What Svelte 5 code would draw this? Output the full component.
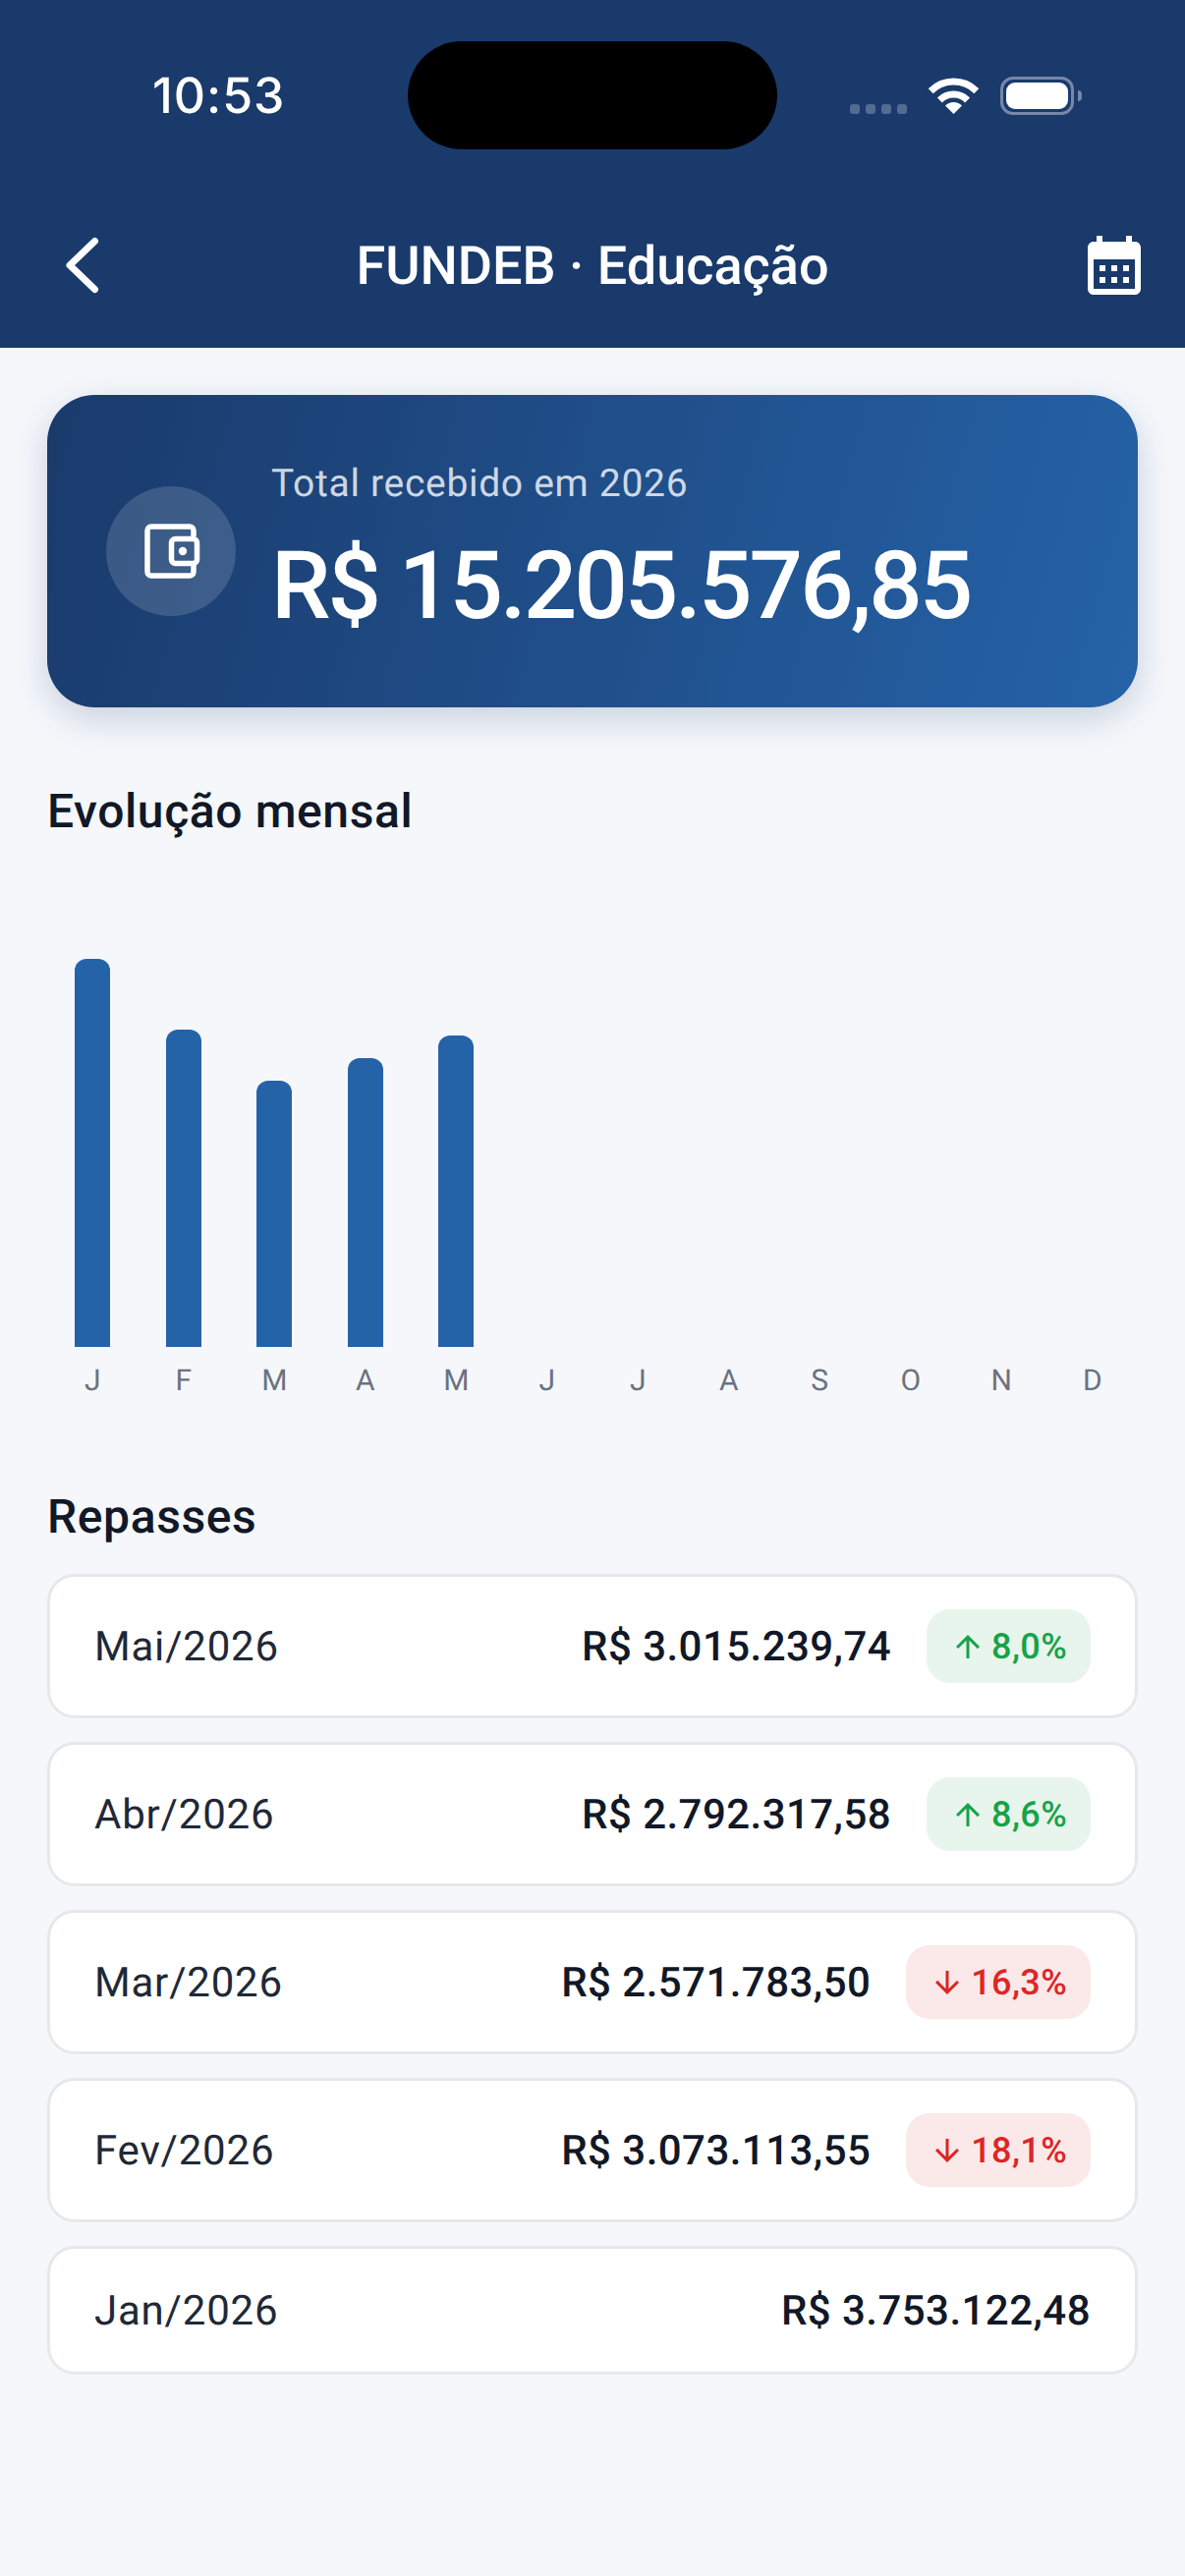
<script lang="ts">
	interface Repasse {
		month: string;
		value: number;
		delta?: number;
	}

	const MONTHS = ['J', 'F', 'M', 'A', 'M', 'J', 'J', 'A', 'S', 'O', 'N', 'D'];
	const CHART_H = 395;

	const repasses: Repasse[] = [
		{ month: 'Mai/2026', value: 3015239.74, delta: 8.0 },
		{ month: 'Abr/2026', value: 2792317.58, delta: 8.6 },
		{ month: 'Mar/2026', value: 2571783.5, delta: -16.3 },
		{ month: 'Fev/2026', value: 3073113.55, delta: -18.1 },
		{ month: 'Jan/2026', value: 3753122.48 }
	];

	const byMonth = [...repasses].reverse().map((r) => r.value);
	const max = Math.max(...byMonth);

	function money(v: number): string {
		return 'R$ ' + v.toLocaleString('pt-BR', { minimumFractionDigits: 2, maximumFractionDigits: 2 });
	}
	function pct(d: number): string {
		return Math.abs(d).toFixed(1).replace('.', ',') + '%';
	}
</script>

<div class="screen">
	<header class="top">
		<div class="status">
			<span class="time">10:53</span>
			<div class="island"></div>
			<div class="status-icons">
				<div class="signal"><i></i><i></i><i></i><i></i></div>
				<svg class="wifi" width="51" height="37" viewBox="0 0 51 37" fill="none" stroke="#fff" aria-hidden="true">
					<path d="M2.2 13.7A33 33 0 0 1 48.8 13.7" stroke-width="7" />
					<path d="M11.4 22.9A20 20 0 0 1 39.6 22.9" stroke-width="7" />
					<path d="M25.5 37L17 28.5A12 12 0 0 1 34 28.5Z" fill="#fff" stroke="none" />
				</svg>
				<div class="battery"><div class="charge"></div></div>
			</div>
		</div>
		<nav class="nav">
			<svg width="72" height="72" viewBox="0 0 72 72" fill="none" aria-hidden="true">
				<path d="M60.5 11.5L35 36L60.5 60.5" stroke="#fff" stroke-width="7" stroke-linecap="round" stroke-linejoin="round" />
			</svg>
			<h1>FUNDEB · Educação</h1>
			<svg width="72" height="72" viewBox="0 0 24 24" fill="#fff" aria-hidden="true">
				<path d="M19 4h-1V2h-2v2H8V2H6v2H5c-1.11 0-1.99.9-1.99 2L3 20c0 1.1.89 2 2 2h14c1.1 0 2-.9 2-2V6c0-1.1-.9-2-2-2zm0 16H5V10h14v10zM9 14H7v-2h2v2zm4 0h-2v-2h2v2zm4 0h-2v-2h2v2zm-8 4H7v-2h2v2zm4 0h-2v-2h2v2zm4 0h-2v-2h2v2z" />
			</svg>
		</nav>
	</header>

	<main>
		<section class="total">
			<div class="wallet">
				<svg width="72" height="72" viewBox="0 0 72 72" fill="none" stroke="#fff" stroke-width="5.5" aria-hidden="true">
					<path d="M59 21v-6a4 4 0 0 0-4-4H16a4 4 0 0 0-4 4v42a4 4 0 0 0 4 4h39a4 4 0 0 0 4-4v-7" />
					<rect x="36.5" y="23.5" width="26" height="25" rx="4" />
					<circle cx="48" cy="36" r="4.2" fill="#fff" stroke="none" />
				</svg>
			</div>
			<div>
				<div class="label">Total recebido em 2026</div>
				<div class="amount">R$ 15.205.576,85</div>
			</div>
		</section>

		<h2 class="first">Evolução mensal</h2>
		<div class="chart">
			{#each MONTHS as m, i}
				<div class="col">
					{#if byMonth[i]}
						<div class="bar" style="height: {(byMonth[i] / max) * CHART_H}px"></div>
					{/if}
					<span>{m}</span>
				</div>
			{/each}
		</div>

		<h2 class="second">Repasses</h2>
		<div class="list">
			{#each repasses as r}
				<div class="row">
					<span class="month">{r.month}</span>
					<span class="value">{money(r.value)}</span>
					{#if r.delta != null}
						<span class="badge" class:down={r.delta < 0}>
							<svg width="36" height="36" viewBox="0 0 24 24" fill="currentColor" aria-hidden="true">
								{#if r.delta < 0}
									<path d="M20 12l-1.41-1.41L13 16.17V4h-2v12.17l-5.58-5.59L4 12l8 8 8-8z" />
								{:else}
									<path d="M4 12l1.41 1.41L11 7.83V20h2V7.83l5.58 5.59L20 12l-8-8-8 8z" />
								{/if}
							</svg>
							{pct(r.delta)}
						</span>
					{/if}
				</div>
			{/each}
		</div>
	</main>
</div>

<style>
	:global(body) {
		margin: 0;
		background: #f5f7fb;
	}
	.screen {
		width: 1206px;
		min-height: 2622px;
		background: #f5f7fb;
		font-family: Roboto, 'Liberation Sans', sans-serif;
		text-rendering: geometricPrecision;
		color: #111827;
	}
	.top {
		height: 354px;
		background: #1a3a6b;
		color: #fff;
	}
	.status {
		position: relative;
		height: 186px;
		display: flex;
		align-items: flex-start;
		justify-content: space-between;
	}
	.time {
		margin: 68px 0 0 155px;
		font-family: Inter, 'Liberation Sans', sans-serif;
		font-size: 50px;
		line-height: 60px;
		font-weight: 500;
		letter-spacing: 1px;
	}
	.island {
		position: absolute;
		left: 415px;
		top: 42px;
		width: 376px;
		height: 110px;
		border-radius: 55px;
		background: #000;
	}
	.status-icons {
		display: flex;
		align-items: flex-end;
		margin: 78px 113px 0 0;
		height: 39px;
	}
	.signal {
		display: flex;
		gap: 6px;
		margin: 0 22px 1px 0;
	}
	.signal i {
		width: 10px;
		height: 10px;
		border-radius: 3px;
		background: rgba(255, 255, 255, 0.25);
	}
	.wifi {
		margin: 0 22px 1px 0;
	}
	.battery {
		position: relative;
		box-sizing: border-box;
		width: 75px;
		height: 39px;
		padding: 3px;
		border: 3px solid rgba(255, 255, 255, 0.4);
		border-radius: 13px;
	}
	.battery::after {
		content: '';
		position: absolute;
		right: -11px;
		top: 11px;
		width: 4px;
		height: 11px;
		border-radius: 0 4px 4px 0;
		background: rgba(255, 255, 255, 0.4);
	}
	.charge {
		height: 100%;
		border-radius: 9px;
		background: #fff;
	}
	.nav {
		height: 168px;
		padding: 0 36px;
		display: flex;
		align-items: center;
		justify-content: space-between;
	}
	h1 {
		margin: 0;
		padding-top: 2px;
		font-size: 54px;
		font-weight: 500;
	}
	main {
		padding: 48px 48px 0;
	}
	.total {
		height: 318px;
		box-sizing: border-box;
		padding: 0 60px;
		display: flex;
		align-items: center;
		gap: 36px;
		border-radius: 48px;
		background: linear-gradient(105deg, #1a3a6b, #2563a8);
		box-shadow: 0 12px 36px rgba(26, 58, 107, 0.2);
		color: #fff;
	}
	.wallet {
		width: 132px;
		height: 132px;
		flex: none;
		display: flex;
		align-items: center;
		justify-content: center;
		border-radius: 50%;
		background: rgba(255, 255, 255, 0.15);
	}
	.label {
		font-size: 39px;
		line-height: 46px;
		letter-spacing: 0.7px;
		color: rgba(255, 255, 255, 0.8);
	}
	.amount {
		margin-top: 26px;
		font-size: 96px;
		line-height: 113px;
		font-weight: 500;
		letter-spacing: -3px;
	}
	h2 {
		margin: 0;
		font-size: 48px;
		line-height: 56px;
		font-weight: 500;
		letter-spacing: 0.6px;
	}
	h2.first {
		margin-top: 78px;
	}
	h2.second {
		margin-top: 93px;
	}
	.chart {
		display: grid;
		grid-template-columns: repeat(12, 1fr);
		height: 540px;
		margin-top: 29px;
	}
	.col {
		display: flex;
		flex-direction: column;
		align-items: center;
		justify-content: flex-end;
	}
	.bar {
		width: 36px;
		border-radius: 12px 12px 0 0;
		background: #2563a8;
	}
	.col span {
		margin-top: 17px;
		font-size: 30px;
		line-height: 35px;
		color: #6b7280;
	}
	.list {
		display: flex;
		flex-direction: column;
		gap: 24px;
		margin-top: 30px;
	}
	.row {
		display: flex;
		align-items: center;
		padding: 33px 45px;
		border: 3px solid #e6e8ec;
		border-radius: 28px;
		background: #fff;
	}
	.month {
		flex: 1;
		padding-top: 2px;
		font-size: 42px;
		line-height: 57px;
		letter-spacing: 0.8px;
		color: #1f2937;
	}
	.value {
		padding-top: 2px;
		font-size: 42px;
		font-weight: 500;
		letter-spacing: 0.45px;
	}
	.badge {
		display: flex;
		align-items: center;
		gap: 6px;
		margin-left: 36px;
		height: 75px;
		padding: 0 24px;
		border-radius: 24px;
		background: #e8f5ec;
		color: #16a34a;
		font-size: 36px;
		font-weight: 500;
		letter-spacing: 0.35px;
	}
	.badge.down {
		background: #fbe9e9;
		color: #dc2626;
	}
</style>
